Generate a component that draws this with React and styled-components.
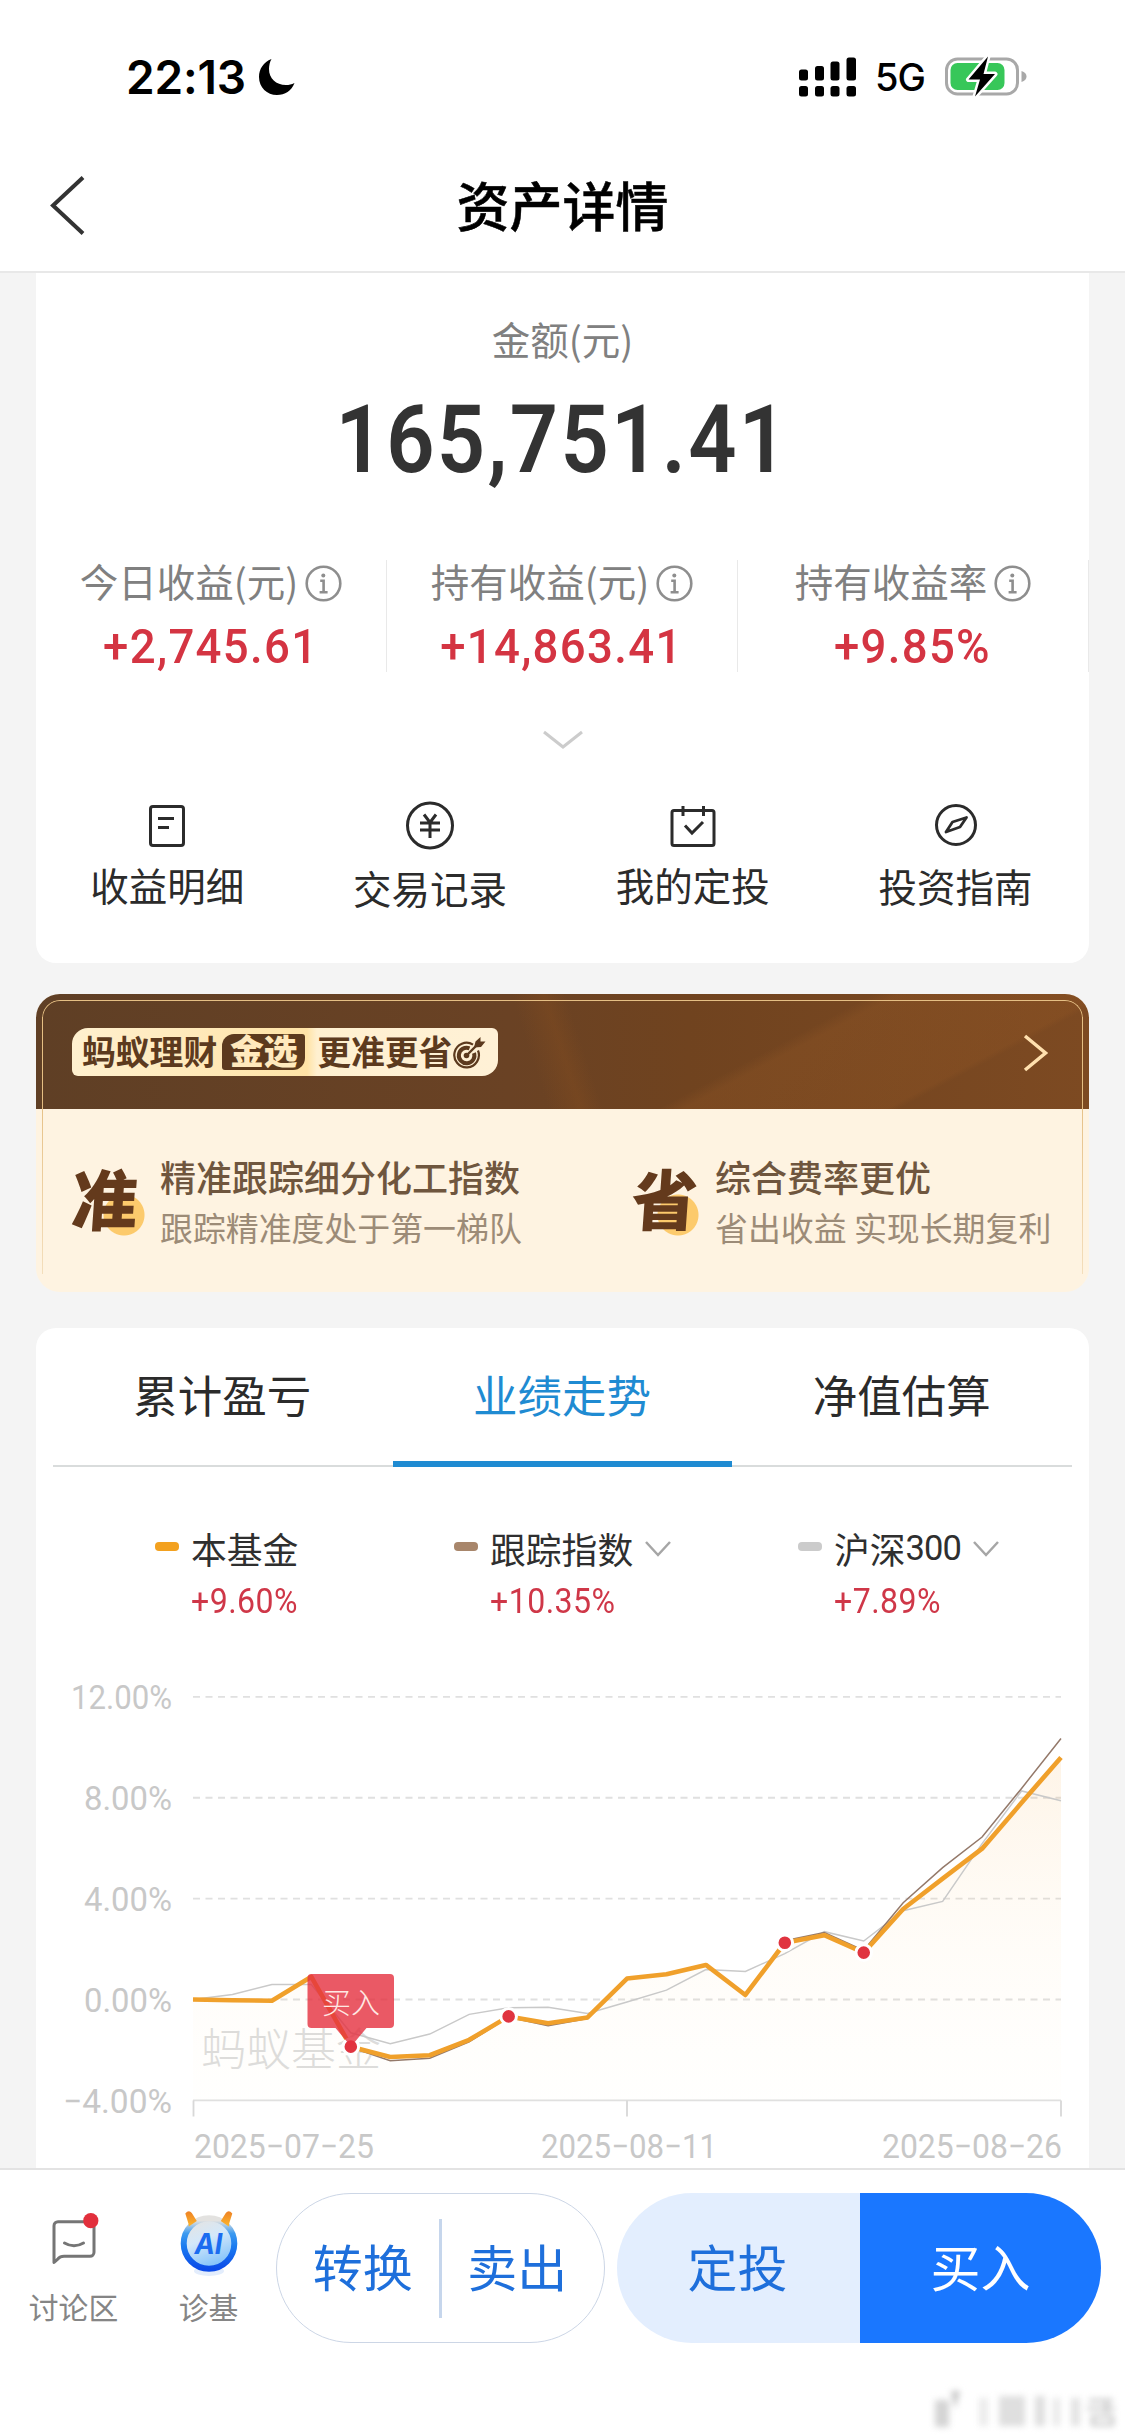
import React from "react";
import styled, { createGlobalStyle } from "styled-components";

const CJK = `"Noto Sans CJK SC", sans-serif`;
const DIN = `Roboto, "Noto Sans CJK SC", sans-serif`;

const GlobalStyle = createGlobalStyle`
  * {
    box-sizing: border-box;
  }
  body {
    margin: 0;
    background: #f4f4f4;
    font-family: ${CJK};
  }
  svg {
    display: block;
    flex-shrink: 0;
  }
`;

const Page = styled.div`
  width: 1125px;
  height: 2436px;
  display: flex;
  flex-direction: column;
  position: relative;
  overflow: hidden;
  background: #f4f4f4;
`;

const StatusBar = styled.div`
  height: 140px;
  padding: 13px 98px 0 126px;
  display: flex;
  align-items: center;
  justify-content: space-between;
  background: #fff;
`;

const StatusGroup = styled.div`
  display: flex;
  align-items: center;
`;

const Clock = styled.span`
  width: 132px;
  font-family: Inter, sans-serif;
  font-size: 46px;
  font-weight: 600;
  letter-spacing: -0.2px;
  white-space: nowrap;
`;

const Network = styled.span`
  margin: 0 20px 0 18px;
  font-family: Inter, sans-serif;
  font-size: 38px;
  font-weight: 500;
  letter-spacing: -1px;
`;

const NavBar = styled.div`
  height: 133px;
  padding: 0 50px;
  display: grid;
  grid-template-columns: 60px 1fr 60px;
  align-items: center;
  background: #fff;
  border-bottom: 2px solid #e8e8e8;
`;

const NavTitle = styled.h1`
  margin: 0 0 4px;
  font-size: 53px;
  line-height: 60px;
  font-weight: 500;
  text-align: center;
  color: #000;
  -webkit-text-stroke: 0.5px #000;
`;

const Scroll = styled.div`
  height: 1895px;
  padding: 0 36px;
  overflow: hidden;
`;

const Card = styled.section`
  background: #fff;
  border-radius: ${(p) => p.$radius};
  margin-top: ${(p) => p.$gap || 0}px;
  height: ${(p) => p.$height}px;
  display: flex;
  flex-direction: column;
`;

const AmountLabel = styled.div`
  margin-top: 38px;
  font-size: 38.5px;
  line-height: 54px;
  text-align: center;
  color: #808080;
`;

const Amount = styled.div`
  margin-top: 25px;
  font-family: ${DIN};
  font-size: 94px;
  line-height: 100px;
  font-weight: 600;
  letter-spacing: 2.6px;
  text-align: center;
  color: #333;
  transform: scaleX(0.9);
`;

const Stats = styled.div`
  margin-top: 70px;
  display: grid;
  grid-template-columns: repeat(3, 1fr);
`;

const Stat = styled.div`
  height: 112px;
  border-right: 1px solid #e9e9e9;
  display: flex;
  flex-direction: column;
  align-items: center;
  gap: 21px;
`;

const StatLabel = styled.div`
  height: 40px;
  display: flex;
  align-items: center;
  gap: 7px;
  font-size: 38.5px;
  line-height: 40px;
  color: #808080;

  svg {
    margin-top: 7px;
  }
`;

const StatValue = styled.div`
  margin-right: 1px;
  font-family: ${DIN};
  font-size: 49px;
  line-height: 52px;
  font-weight: 500;
  letter-spacing: 1.4px;
  color: #d43442;
  transform: scaleX(0.93);
`;

const Expand = styled.div`
  margin-top: 58px;
  display: flex;
  justify-content: center;
`;

const Actions = styled.div`
  margin: 51px 2px 0 0;
  display: grid;
  grid-template-columns: repeat(4, 1fr);
`;

const Action = styled.div`
  display: flex;
  flex-direction: column;
  align-items: center;
  gap: ${(p) => p.$gap}px;
  font-size: 38.5px;
  line-height: 44px;
  color: #2b2b2b;
`;

const Banner = styled.section`
  margin-top: 31px;
  height: 298px;
  border-radius: 24px;
  overflow: hidden;
  position: relative;
  background: #fef3e1;

  &::after {
    content: "";
    position: absolute;
    inset: 6px 6px 18px 6px;
    border: 1px solid #e5bf84;
    border-bottom: 0;
    border-radius: 18px 18px 0 0;
    -webkit-mask-image: linear-gradient(#000 35%, rgba(0, 0, 0, 0.4));
    mask-image: linear-gradient(#000 35%, rgba(0, 0, 0, 0.4));
  }
`;

const BannerHead = styled.div`
  height: 115px;
  padding: 0 40px 0 36px;
  display: flex;
  align-items: center;
  justify-content: space-between;
  background:
    linear-gradient(152deg, transparent 66%, rgba(158, 94, 40, 0.24) 68%, rgba(150, 88, 36, 0.26) 84%, transparent 85%),
    linear-gradient(72deg, transparent 47%, rgba(140, 80, 30, 0.3) 50%, transparent 52%),
    linear-gradient(90deg, #5f3f25 0%, #6a4224 45%, #70431f 62%, #7d4a22 100%);

  svg {
    margin-top: 3px;
  }
`;

const Slogan = styled.div`
  width: 426px;
  height: 48px;
  margin-top: 1px;
  padding-left: 10px;
  display: flex;
  align-items: center;
  border-radius: 16px 6px 16px 6px;
  background: linear-gradient(90deg, #fff0cf 0, #ffe3a6 235px, #fff0d0 245px, #fff1d6 100%);
  font-size: 33.8px;
  line-height: 38px;
  font-weight: 700;
  color: #5c3a1e;
  white-space: nowrap;
`;

const SloganText = styled.span`
  padding-bottom: 2px;
`;

const Pick = styled.span`
  width: 83px;
  height: 36px;
  margin: 0 12px 0 5px;
  border-radius: 12px 3px 12px 3px;
  background: #5c3a1e;
  color: #ffe9bd;
  text-align: center;
  line-height: 32px;
  font-weight: 900;
`;

const BannerBody = styled.div`
  height: 183px;
  padding: 44px 0 0 36px;
  display: grid;
  grid-template-columns: 560px 1fr;
`;

const Benefit = styled.div`
  display: flex;
  gap: ${(p) => p.$gap}px;
`;

const Seal = styled.div`
  width: 74px;
  height: 90px;
  font-size: 66px;
  line-height: 86px;
  font-weight: 900;
  color: #643a1c;
  background: radial-gradient(circle at ${(p) => p.$dot}px 62px, #fcca6c 0 20px, transparent 21px);

  span {
    display: block;
    transform: skewX(-4deg);
  }
`;

const BenefitTitle = styled.div`
  font-size: 36px;
  line-height: 46px;
  font-weight: 500;
  color: #6f563e;
  white-space: nowrap;
`;

const BenefitNote = styled.div`
  margin-top: 5px;
  font-size: 32.9px;
  line-height: 46px;
  color: #9c8b77;
  white-space: nowrap;
`;

const Tabs = styled.div`
  margin: 0 17px;
  display: grid;
  grid-template-columns: repeat(3, 1fr);
  box-shadow: inset 0 -2px 0 #d9dcdc;
`;

const Tab = styled.div`
  height: 139px;
  padding-right: 1px;
  border-bottom: 6px solid ${(p) => (p.$active ? "#1f8bd2" : "transparent")};
  font-size: 44.5px;
  line-height: 132px;
  text-align: center;
  color: ${(p) => (p.$active ? "#1f8bd2" : "#2b2b2b")};
`;

const Legend = styled.div`
  height: 154px;
  padding: 59px 0 0 119px;
  display: grid;
  grid-template-columns: 299px 344px 1fr;
`;

const LegendName = styled.div`
  height: 44px;
  display: flex;
  align-items: center;
  font-size: 35.8px;
  line-height: 44px;
  color: #2f2f2f;

  svg {
    margin: 0 0 0 12px;
  }
`;

const LegendCode = styled.span`
  width: 55px;
  font-family: ${DIN};
  font-size: 34.5px;
  letter-spacing: -0.9px;
`;

const Swatch = styled.span`
  width: 24px;
  height: 9px;
  margin: -4px 12px 0 0;
  border-radius: 4px;
  background: ${(p) => p.$color};
`;

const LegendValue = styled.div`
  margin: 11px 0 0 36px;
  font-family: ${DIN};
  font-size: 34.5px;
  line-height: 40px;
  letter-spacing: 0.5px;
  color: #cf3748;
  transform: scaleX(0.93);
  transform-origin: left;
`;

const BottomBar = styled.div`
  height: 268px;
  padding: 23px 0 0 6px;
  border-top: 2px solid #e3e3e3;
  display: flex;
  align-items: flex-start;
  background: #fff;
`;

const Shortcut = styled.div`
  width: 135px;
  padding-top: 16px;
  display: flex;
  flex-direction: column;
  align-items: center;
  gap: 15px;
  font-size: 29.8px;
  line-height: 36px;
  color: #858585;
`;

const Pill = styled.div`
  width: ${(p) => p.$width}px;
  height: 150px;
  margin-right: 12px;
  border-radius: 75px;
  overflow: hidden;
  display: flex;
  align-items: center;
  border: ${(p) => (p.$outlined ? "1px solid #ccd6e6" : "0")};
`;

const PillDivider = styled.div`
  width: 3px;
  height: 99px;
  background: #c6d6ec;
`;

const PillButton = styled.button`
  flex: ${(p) => p.$grow || 1};
  height: 150px;
  margin: 0;
  border: 0;
  padding: ${(p) => p.$pad || "0 0 6px"};
  background: ${(p) => p.$bg || "transparent"};
  color: ${(p) => p.$color || "#1e6fdb"};
  font-family: ${CJK};
  font-size: 50px;
  line-height: 60px;
`;

const Watermark = styled.div`
  position: absolute;
  right: 8px;
  bottom: 8px;
  filter: blur(3px);
`;

const ChartText = styled.text`
  font-family: ${DIN};
  font-size: 33.5px;
  fill: #c8c8c8;
`;

const ChartNote = styled.text`
  font-family: ${CJK};
  font-size: ${(p) => p.$size}px;
  font-weight: 300;
  fill: ${(p) => p.$fill};
`;

const Chevron = ({ width, height, color, stroke = 2.5 }) => (
  <svg width={width} height={height} viewBox={`0 0 ${width} ${height}`} fill="none">
    <path
      d={`M1 2L${width / 2} ${height - 2}L${width - 1} 2`}
      stroke={color}
      strokeWidth={stroke}
    />
  </svg>
);

const InfoIcon = () => (
  <svg width="37" height="37" viewBox="0 0 37 37" fill="none" stroke="#8e8e8e">
    <circle cx="18.5" cy="18.5" r="16.8" strokeWidth="2.6" />
    <circle cx="18.3" cy="10.6" r="2" fill="#8e8e8e" stroke="none" />
    <path d="M15.2 15.8h3.4v11.4M14.6 27.3h8" strokeWidth="2.6" />
  </svg>
);

const BillIcon = () => (
  <svg width="50" height="50" viewBox="0 0 50 50" fill="none" stroke="#2b2b2b" strokeWidth="3">
    <rect x="8.5" y="6.5" width="33" height="39" rx="2.5" />
    <path d="M16 18.5h16M16 27.5h11" />
  </svg>
);

const YuanIcon = () => (
  <svg width="50" height="50" viewBox="0 0 50 50" fill="none" stroke="#2b2b2b" strokeWidth="3">
    <circle cx="25" cy="25.5" r="22.5" />
    <path d="M19 14.5L25 22.5L31 14.5M25 22.5V38M15 23h20M15 30h20" />
  </svg>
);

const CalendarIcon = () => (
  <svg width="50" height="50" viewBox="0 0 50 50" fill="none" stroke="#2b2b2b" strokeWidth="3">
    <rect x="4" y="10.5" width="42" height="35" rx="2" />
    <path d="M15 6v10M35.5 6v10M17 25.5l7 7.5L35 22" />
  </svg>
);

const CompassIcon = () => (
  <svg width="50" height="50" viewBox="0 0 50 50" fill="none" stroke="#2b2b2b" strokeWidth="3">
    <circle cx="25" cy="25" r="19.5" />
    <path d="M35.5 17.5L29 27L15 32L21.5 22Z" strokeWidth="2.8" strokeLinejoin="round" />
  </svg>
);

const TargetIcon = () => (
  <svg width="34" height="36" viewBox="0 0 34 36" fill="none" stroke="#5c3a1e">
    <path d="M21 8.6A12.3 12.3 0 1 0 26 14.5" strokeWidth="2.2" />
    <path d="M17.5 12.3A7.8 7.8 0 1 0 22 17" strokeWidth="4" />
    <circle cx="14.5" cy="19.5" r="2.8" fill="#5c3a1e" stroke="none" />
    <path d="M14.5 19.5L26 8" strokeWidth="2.4" />
    <path d="M22 11.5L23.5 5.5L28.5 1L28.5 5.5L33.5 5.5L29 11Z" fill="#5c3a1e" stroke="none" />
  </svg>
);

const ForumIcon = () => (
  <svg width="60" height="64" viewBox="0 0 60 64" fill="none">
    <path
      d="M14 12.7H46a4 4 0 0 1 4 4V43.3a4 4 0 0 1-4 4H20q-4 0-6 2.5L10 53.5V16.7a4 4 0 0 1 4-4z"
      stroke="#757575"
      strokeWidth="3"
      strokeLinejoin="round"
    />
    <path d="M20.5 34q9.5 5.5 19 0" stroke="#757575" strokeWidth="3" strokeLinecap="round" />
    <circle cx="46.8" cy="11.7" r="7.6" fill="#e22f3c" />
  </svg>
);

const AiIcon = () => (
  <svg width="64" height="64" viewBox="0 0 64 64" fill="none" overflow="visible">
    <defs>
      <linearGradient id="ring" x1="0" y1="0" x2="0" y2="1">
        <stop offset="0.05" stopColor="#e3e2e0" />
        <stop offset="0.3" stopColor="#3d9bf0" />
        <stop offset="0.55" stopColor="#1b7cf0" />
        <stop offset="1" stopColor="#0b4be8" />
      </linearGradient>
      <linearGradient id="face" x1="0" y1="0" x2="0.4" y2="1">
        <stop offset="0" stopColor="#eae3dc" />
        <stop offset="0.5" stopColor="#d3e8fa" />
        <stop offset="1" stopColor="#86c4fa" />
      </linearGradient>
      <linearGradient id="horn" x1="0" y1="0" x2="0" y2="1">
        <stop offset="0" stopColor="#ee8226" />
        <stop offset="1" stopColor="#fcb62b" />
      </linearGradient>
    </defs>
    <ellipse cx="32" cy="62" rx="15" ry="5" fill="#e3edfc" />
    <circle cx="32" cy="34.5" r="25.3" fill="url(#face)" stroke="url(#ring)" strokeWidth="6" />
    <path d="M8.3 4.5q3.5-4 6.5-0.5l5 8-8 5.5q0-2.5-1-5z" fill="url(#horn)" />
    <path d="M55.3 4.5q-3.500-4-6.500-0.500l-5 8 8 5.500q0-2.500 1-5z" fill="url(#horn)" />
    <text
      x="31.5"
      y="44.5"
      textAnchor="middle"
      fontFamily="Inter, sans-serif"
      fontSize="28"
      fontWeight="700"
      fontStyle="italic"
      textLength="28"
      lengthAdjust="spacingAndGlyphs"
      fill="#1b6cf0"
    >
      AI
    </text>
  </svg>
);

const MoonIcon = () => (
  <svg width="37" height="38" viewBox="0 0 37 38">
    <path
      d="M13.5 1C5.5 4 1 11 1 19c0 10.5 8 18 18 18 8 0 14.5-4 17.5-12-3 1.5-5.5 2-8.5 2-10 0-17-6.500-17-16 0-3.500 0.800-7 2.500-10z"
      fill="#000"
    />
  </svg>
);

const SignalIcon = () => (
  <svg width="58" height="40" viewBox="0 0 58 40" fill="#000">
    <rect x="0" y="12.5" width="9" height="11" rx="2.5" />
    <rect x="16" y="9" width="9" height="14.5" rx="2.5" />
    <rect x="31.5" y="4.5" width="9" height="19" rx="2.5" />
    <rect x="47.5" y="0.5" width="9.5" height="23" rx="2.5" />
    <rect x="0" y="29" width="9" height="10.5" rx="2.5" />
    <rect x="16" y="29" width="9" height="10.5" rx="2.5" />
    <rect x="31.5" y="29" width="9" height="10.5" rx="2.5" />
    <rect x="47.5" y="29" width="9.5" height="10.5" rx="2.5" />
  </svg>
);

const BatteryIcon = () => (
  <svg width="82" height="42" viewBox="0 0 82 42" fill="none">
    <rect x="1.5" y="3" width="71" height="35" rx="11" stroke="#a8a8a8" strokeWidth="3" />
    <rect x="5.5" y="7" width="54" height="27" rx="7" fill="#37c759" />
    <path d="M76.5 15c3.5 1 5 3 5 5.5s-1.5 4.5-5 5.5z" fill="#a8a8a8" />
    <path
      d="M43 0.5L23.5 23.5h11.5l-5 17L50 18H38.5z"
      fill="#000"
      stroke="#fff"
      strokeWidth="5"
      strokeLinejoin="round"
      paintOrder="stroke"
    />
  </svg>
);

const stats = [
  { label: "今日收益(元)", value: "+2,745.61" },
  { label: "持有收益(元)", value: "+14,863.41" },
  { label: "持有收益率", value: "+9.85%" },
];

const actions = [
  { label: "收益明细", icon: <BillIcon />, gap: 12 },
  { label: "交易记录", icon: <YuanIcon />, gap: 15 },
  { label: "我的定投", icon: <CalendarIcon />, gap: 12 },
  { label: "投资指南", icon: <CompassIcon />, gap: 13 },
];

const legend = [
  { name: "本基金", value: "+9.60%", color: "#f3a11f" },
  { name: "跟踪指数", value: "+10.35%", color: "#a8866b", open: true },
  { name: "沪深", code: "300", value: "+7.89%", color: "#cbcbcb", open: true },
];

const fund = [
  0, -0.03, -0.05, 0.9, -1.87, -2.28, -2.21, -1.6, -0.67, -0.94, -0.71, 0.83,
  1, 1.37, 0.18, 2.25, 2.55, 1.86, 3.59, 4.79, 5.98, 7.8, 9.6,
];
const tracked = [
  0, -0.04, -0.06, 0.9, -1.9, -2.43, -2.33, -1.68, -0.7, -1.04, -0.76, 0.83,
  1, 1.35, 0.16, 2.33, 2.66, 1.95, 3.84, 5.23, 6.44, 8.37, 10.35,
];
const csi300 = [
  0, 0.2, 0.59, 0.59, -1.32, -1.75, -1.37, -0.59, -0.33, -0.31, -0.55, -0.1,
  0.37, 1.19, 1.11, 1.82, 2.69, 2.32, 3.52, 3.89, 6.18, 8.27, 7.88,
];
const buys = [4, 8, 15, 17];

const ticks = [
  { label: "12.00%", value: 12, width: 101 },
  { label: "8.00%", value: 8, width: 88 },
  { label: "4.00%", value: 4, width: 88 },
  { label: "0.00%", value: 0, width: 88 },
  { label: "−4.00%", value: -4, width: 109 },
];

const dates = [
  { label: "2025−07−25", x: 158, width: 180 },
  { label: "2025−08−11", x: 505, width: 176 },
  { label: "2025−08−26", x: 846, width: 180 },
];

const LEFT = 157;
const RIGHT = 1025;
const ZERO = 378.5;
const BASE = 479.5;

const px = (i) => LEFT + ((RIGHT - LEFT) / (fund.length - 1)) * i;
const py = (v) => ZERO - v * 25.22;
const line = (data) => data.map((v, i) => `${px(i)},${py(v)}`).join(" ");

function TrendChart() {
  return (
    <svg width="1053" height="547" viewBox="0 0 1053 547" fill="none">
      <defs>
        <linearGradient id="area" x1="0" y1={py(9.6)} x2="0" y2={BASE} gradientUnits="userSpaceOnUse">
          <stop offset="0" stopColor="#f8a53a" stopOpacity="0.12" />
          <stop offset="0.55" stopColor="#fbc36e" stopOpacity="0.05" />
          <stop offset="1" stopColor="#fde6b0" stopOpacity="0.02" />
        </linearGradient>
      </defs>
      {ticks.map((t) => (
        <g key={t.value}>
          <ChartText
            x={136 - t.width}
            y={py(t.value) + 12.5}
            textLength={t.width}
            lengthAdjust="spacingAndGlyphs"
          >
            {t.label}
          </ChartText>
          <path
            d={`M${LEFT} ${py(t.value)}H${RIGHT}`}
            stroke="#e0e0e0"
            strokeWidth="1.8"
            strokeDasharray={t.value === -4 ? "none" : "7 5.5"}
          />
        </g>
      ))}
      <path d={`M${LEFT + 0.5} ${BASE}v16M591 ${BASE}v16M${RIGHT} ${BASE}v16`} stroke="#d8d8d8" strokeWidth="1.8" />
      <ChartNote x="165" y="445" $size={45} $fill="#dcdcdc">
        蚂蚁基金
      </ChartNote>
      <polygon points={`${LEFT},${BASE} ${line(fund)} ${RIGHT},${BASE}`} fill="url(#area)" />
      <polyline points={line(csi300)} stroke="#c9c9c9" strokeWidth="1.5" />
      <polyline points={line(tracked)} stroke="#94796a" strokeWidth="1.5" />
      <polyline points={line(fund)} stroke="#f0a02b" strokeWidth="4.6" strokeLinejoin="round" />
      {buys.map((i) => (
        <circle key={i} cx={px(i)} cy={py(fund[i])} r="7.8" fill="#e03440" stroke="#fff" strokeWidth="3" />
      ))}
      <path
        d="M275.5 353h78.5a4 4 0 0 1 4 4v46a4 4 0 0 1-4 4h-23.5l-15.5 18.5L299.5 407h-24a4 4 0 0 1-4-4v-46a4 4 0 0 1 4-4z"
        fill="#e5303f"
        fillOpacity="0.8"
      />
      <ChartNote x="286" y="393" $size={29} $fill="#ffe9e4">
        买入
      </ChartNote>
      {dates.map((d) => (
        <ChartText key={d.label} x={d.x} y="537" textLength={d.width} lengthAdjust="spacingAndGlyphs">
          {d.label}
        </ChartText>
      ))}
    </svg>
  );
}

export default function App() {
  return (
    <Page>
      <GlobalStyle />
      <StatusBar>
        <StatusGroup>
          <Clock>22:13</Clock>
          <MoonIcon />
        </StatusGroup>
        <StatusGroup>
          <SignalIcon />
          <Network>5G</Network>
          <BatteryIcon />
        </StatusGroup>
      </StatusBar>
      <NavBar>
        <svg width="36" height="60" viewBox="0 0 36 60" fill="none">
          <path d="M33 1.5L3 29.5L33 57.5" stroke="#333" strokeWidth="4" />
        </svg>
        <NavTitle>资产详情</NavTitle>
      </NavBar>

      <Scroll>
        <Card $height={690} $radius="0 0 20px 20px">
          <AmountLabel>金额(元)</AmountLabel>
          <Amount>165,751.41</Amount>
          <Stats>
            {stats.map((s) => (
              <Stat key={s.label}>
                <StatLabel>
                  {s.label}
                  <InfoIcon />
                </StatLabel>
                <StatValue>{s.value}</StatValue>
              </Stat>
            ))}
          </Stats>
          <Expand>
            <Chevron width={40} height={19} color="#ccc" stroke={3} />
          </Expand>
          <Actions>
            {actions.map((a) => (
              <Action key={a.label} $gap={a.gap}>
                {a.icon}
                {a.label}
              </Action>
            ))}
          </Actions>
        </Card>

        <Banner>
          <BannerHead>
            <Slogan>
              <SloganText>蚂蚁理财</SloganText>
              <Pick>金选</Pick>
              <SloganText>更准更省</SloganText>
              <TargetIcon />
            </Slogan>
            <svg width="26" height="38" viewBox="0 0 26 38" fill="none">
              <path d="M2 2L22.5 19L2 36" stroke="#ffe0ae" strokeWidth="3.5" />
            </svg>
          </BannerHead>
          <BannerBody>
            <Benefit $gap={14}>
              <Seal $dot={52}>
                <span>准</span>
              </Seal>
              <div>
                <BenefitTitle>精准跟踪细分化工指数</BenefitTitle>
                <BenefitNote>跟踪精准度处于第一梯队</BenefitNote>
              </div>
            </Benefit>
            <Benefit $gap={9}>
              <Seal $dot={46}>
                <span>省</span>
              </Seal>
              <div>
                <BenefitTitle>综合费率更优</BenefitTitle>
                <BenefitNote>省出收益 实现长期复利</BenefitNote>
              </div>
            </Benefit>
          </BannerBody>
        </Banner>

        <Card $height={860} $gap={36} $radius="20px 20px 0 0">
          <Tabs>
            <Tab>累计盈亏</Tab>
            <Tab $active>业绩走势</Tab>
            <Tab>净值估算</Tab>
          </Tabs>
          <Legend>
            {legend.map((l) => (
              <div key={l.name}>
                <LegendName>
                  <Swatch $color={l.color} />
                  {l.name}
                  {l.code && <LegendCode>{l.code}</LegendCode>}
                  {l.open && <Chevron width={26} height={17} color="#a6a6a6" />}
                </LegendName>
                <LegendValue>{l.value}</LegendValue>
              </div>
            ))}
          </Legend>
          <TrendChart />
        </Card>
      </Scroll>

      <BottomBar>
        <Shortcut>
          <ForumIcon />
          讨论区
        </Shortcut>
        <Shortcut>
          <AiIcon />
          诊基
        </Shortcut>
        <Pill $width={329} $outlined>
          <PillButton $pad="0 0 6px 10px">转换</PillButton>
          <PillDivider />
          <PillButton $pad="0 11px 6px 0">卖出</PillButton>
        </Pill>
        <Pill $width={484}>
          <PillButton $bg="#e3eefe" $pad="0 2px 6px 0">定投</PillButton>
          <PillButton $bg="#1a77ff" $color="#fff">买入</PillButton>
        </Pill>
      </BottomBar>

      <Watermark>
        <svg width="186" height="38" viewBox="0 0 186 38" fill="#dedede">
          <rect x="4" y="10" width="14" height="27" fill="#d4d4d4" />
          <path d="M20 1h9l-5 18z" fill="#c4c4c4" />
          <rect x="48" y="8" width="9" height="28" fill="#ebebeb" />
          <rect x="68" y="6" width="26" height="30" fill="#dfdfdf" />
          <rect x="104" y="6" width="10" height="30" />
          <rect x="122" y="8" width="7" height="28" fill="#e8e8e8" />
          <rect x="140" y="8" width="9" height="28" fill="#e2e2e2" />
          <path d="M158 9h24v3h-24zM174 9h3v14h-3zM156 17h28v3h-28zM160 25h22v3h-22zM160 33h22v3h-22zM160 25h3v11h-3zM180 25h3v11h-3z" fill="#c4c4c4" />
        </svg>
      </Watermark>
    </Page>
  );
}
